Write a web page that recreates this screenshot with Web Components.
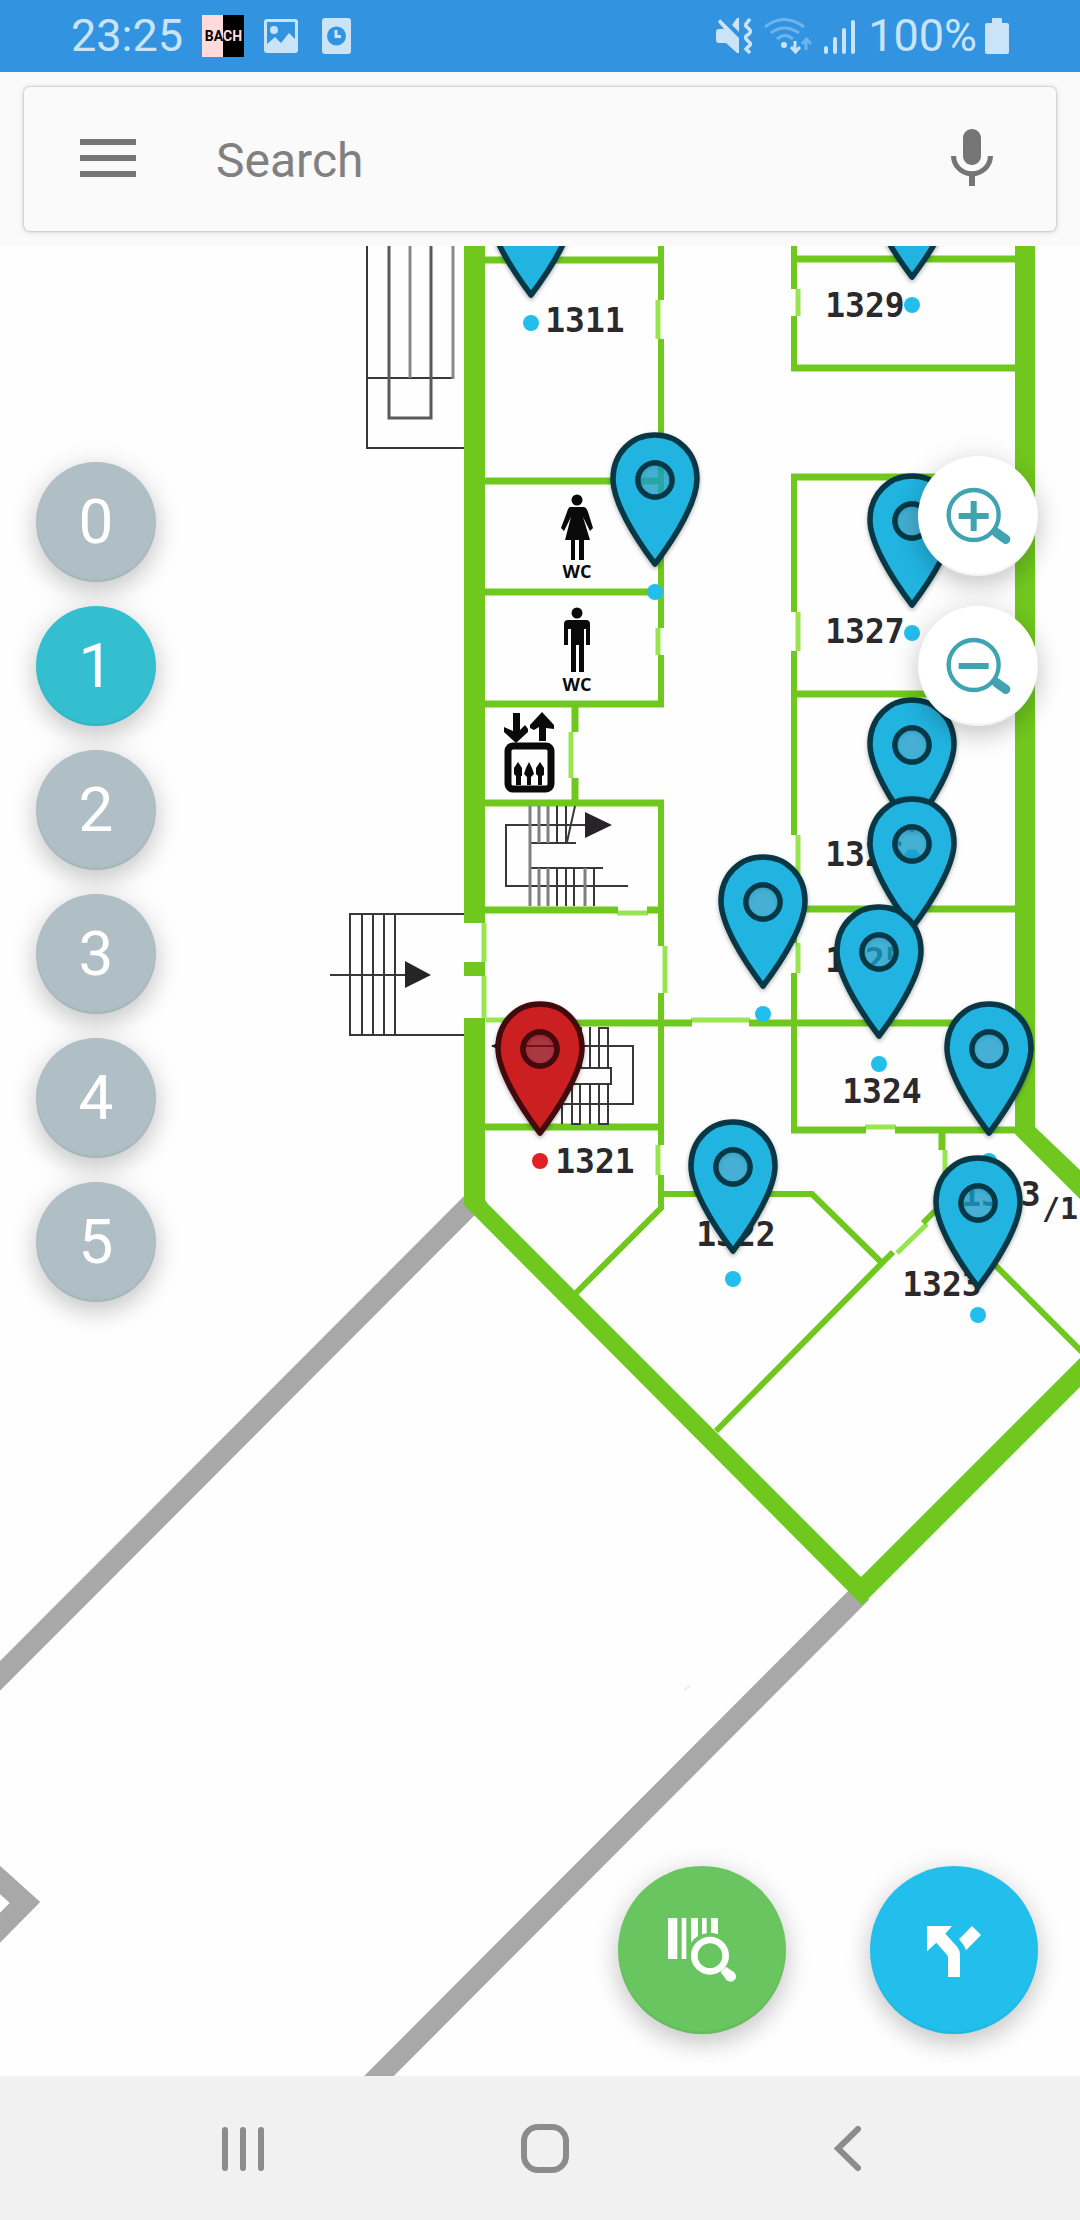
<!DOCTYPE html>
<html lang="en">
<head>
<meta charset="utf-8">
<meta name="viewport" content="width=device-width, initial-scale=1">
<title>Floor map</title>
<style>
  html, body { margin: 0; }
  body { font-family: Roboto, "Noto Sans", sans-serif; background: #fafafa; }
</style>
</head>
<body>
<map-app></map-app>

<template id="tpl-status">
  <style>
    :host { display: flex; height: 72px; padding: 0 71px; box-sizing: border-box; align-items: center; justify-content: space-between; background: #3294e1; color: #cae3f7; font-size: 45px; line-height: 72px; }
    .group { display: flex; align-items: center; }
    .left { gap: 19px; }
    .right { gap: 12px; }
    .power { gap: 8px; }
    svg { display: block; flex: none; }
    .art { display: flex; width: 42px; height: 42px; font: bold 14px/42px Roboto, sans-serif; }
    .art span { flex: 1; background: #ffdada; color: #000; text-align: right; }
    .art span + span { background: #000; color: #ffdada; text-align: left; }
  </style>
  <div class="group left">
    <span>23:25</span>
    <div class="art"><span>BA</span><span>CH</span></div>
    <svg width="36" height="36" viewBox="0 0 36 36"><path fill="#cae3f7" fill-rule="evenodd" d="M4 1H32Q35 1 35 4V32Q35 35 32 35H4Q1 35 1 32V4Q1 1 4 1ZM4 4V26L12 19L18 25L26 15L32 21V4ZM11 8a4 4 0 1 1 0 8a4 4 0 1 1 0-8Z"/></svg>
    <svg width="36" height="36" viewBox="0 0 36 36"><rect x="4" width="29" height="36" rx="3" fill="#cae3f7"/><circle cx="18.500" cy="18" r="9.500" fill="#3294e1"/><path d="M18 12V18.500H23" fill="none" stroke="#cae3f7" stroke-width="3"/></svg>
  </div>
  <div class="group right">
    <svg width="36" height="36" viewBox="0 0 36 36" fill="#cae3f7"><path d="M0 14Q0 11 3 11H8L2 4L4 1L23 20V35H21L10 25H3Q0 25 0 22ZM23 0V14L16 7L21 0Z"/><path d="M34 1L30 6Q29 8 31 9L34 12Q35 14 33 16L30 18Q29 20 31 22L34 25Q35 27 33 28L30 31L34 35" fill="none" stroke="#cae3f7" stroke-width="3.500"/></svg>
    <svg width="48" height="36" viewBox="0 0 48 36" fill="none" stroke-width="3"><g stroke="#6fb3ea"><path d="M1 9Q20-6 40 9M7 15Q20 5 35 15M13 21Q21 14 29 21"/><path d="M42 32V22M38 26L42.500 21L47 26"/></g><circle cx="20" cy="27" r="3" fill="#cae3f7"/><path d="M31 23V33M27 29L31.500 34L36 29" stroke="#cae3f7"/></svg>
    <svg width="32" height="36" viewBox="0 0 32 36" fill="#cae3f7"><rect y="28" width="4" height="8" rx="2"/><rect x="9" y="19" width="4" height="17" rx="2"/><rect x="18" y="10" width="4" height="26" rx="2"/><rect x="27" y="2" width="4" height="34" rx="2"/></svg>
    <div class="group power">
      <span>100%</span>
      <svg width="24" height="36" viewBox="0 0 24 36" fill="#cae3f7"><path d="M7 1Q7 0 8 0H16Q17 0 17 1V5H22Q24 5 24 7V34Q24 36 22 36H2Q0 36 0 34V7Q0 5 2 5H7Z"/></svg>
    </div>
  </div>
</template>

<template id="tpl-search">
  <style>
    :host { display: block; padding: 15px 24px; background: #fafafa; }
    form { display: flex; align-items: center; height: 144px; box-sizing: border-box; padding: 0 48px; border-radius: 6px; background: #fafafa; box-shadow: 0 0 2px 1px rgba(0,0,0,.14), 0 1px 7px rgba(0,0,0,.12); }
    button { display: block; width: 72px; height: 72px; padding: 0; border: 0; background: none; flex: none; }
    svg { display: block; fill: #757575; }
    input { flex: 1; min-width: 0; height: 72px; box-sizing: border-box; margin: 0 24px 0 72px; padding: 2px 0 0; border: 0; outline: 0; background: none; font: 48px Roboto, sans-serif; color: #333; }
    input::placeholder { color: #808080; opacity: 1; }
  </style>
  <form role="search">
    <button type="button" aria-label="Menu"><svg width="72" height="72" viewBox="0 0 72 72"><path d="M8 54h56v-6H8zM8 38h56v-6H8zM8 22h56v-6H8z"/></svg></button>
    <input type="search" aria-label="Search" placeholder="Search">
    <button type="button" aria-label="Voice search"><svg width="72" height="72" viewBox="0 0 24 24"><path d="M12 14c1.660 0 3-1.340 3-3V5c0-1.660-1.340-3-3-3S9 3.340 9 5v6c0 1.660 1.340 3 3 3zm5.300-3c0 3-2.540 5.100-5.300 5.100S6.700 14 6.700 11H5c0 3.410 2.720 6.230 6 6.720V21h2v-3.280c3.280-.48 6-3.300 6-6.720h-1.700z"/></svg></button>
  </form>
</template>

<template id="tpl-pin">
  <style>
    :host { position: absolute; width: 0; height: 0; }
    svg { position: absolute; left: -50px; top: -52px; width: 100px; height: 180px; overflow: visible; }
    .shape { fill: var(--pin-fill, #22b4e1); stroke: var(--pin-line, #083845); stroke-width: 5.500; stroke-linejoin: round; filter: drop-shadow(0 2px 2px rgba(0,0,0,.3)); }
    .ring { fill: none; stroke: var(--pin-line, #083845); stroke-width: 5; }
    .hole { fill: var(--pin-hole, rgba(22,156,200,.8)); }
    .dot { fill: var(--pin-dot, #23bfec); }
    :host([selected]) { --pin-fill: #cc1f21; --pin-line: #420a0c; --pin-hole: rgba(145,0,13,.78); --pin-dot: #e02024; }
  </style>
  <svg viewBox="-50 -52 100 180">
    <circle class="dot" cx="0" cy="112" r="8"/>
    <path class="shape" fill-rule="evenodd" d="M0 84C-22 55-42 21-42-1C-42-27-23-45 0-45C23-45 42-27 42-1C42 21 22 55 0 84ZM0-17A17 17 0 1 0 0 17A17 17 0 1 0 0-17Z"/>
    <circle class="hole" r="17"/><circle class="ring" r="17"/>
  </svg>
</template>

<template id="tpl-round">
  <style>
    :host { display: block; }
    button { display: flex; align-items: center; justify-content: center; width: var(--size, 120px); height: var(--size, 120px); padding: 0; border: 0; border-radius: 50%; background: var(--fill, #b0bec5); color: #fff; font: 62px/120px Roboto, sans-serif; box-shadow: inset 0 -2px 2px rgba(0,0,0,.06), 0 10px 24px rgba(0,0,0,.18), 0 0 32px rgba(0,0,0,.07); }
  </style>
  <button type="button"><slot></slot></button>
</template>

<template id="tpl-plan">
  <style>
    :host { display: block; position: absolute; left: 0; top: 0; }
    svg { display: block; }
    .rooms text { font: bold 33px "DejaVu Sans Mono", monospace; fill: #2c292c; text-anchor: middle; }
    .rooms .suffix { font-size: 30px; }
    .wc { font: bold 18px "Open Sans", sans-serif; text-anchor: middle; }
  </style>
  <svg width="1080" height="1830" viewBox="0 246 1080 1830" fill="none">
    <!-- corridors to neighbouring blocks -->
    <g stroke="#a8a8a8" stroke-width="21">
      <path d="M480 1195L-20 1696M862 1592L370 2085M-20 1862L25 1902.500L-20 1948"/>
    </g>
    <path d="M684 1690L690 1686" stroke="#ececec" stroke-width="2"/>
    <!-- outer walls -->
    <g fill="#70c81e">
      <path d="M464 246H485V923H464ZM464 962H485V976H464ZM464 1018H485V1201L861 1577L1080 1358V1387L862 1605L464 1205Z"/>
      <path d="M1015 246H1035V1127L1080 1170V1199L1015 1134Z"/>
    </g>
    <!-- doors -->
    <g stroke="#97e650" stroke-width="5">
      <path d="M658 300V339M658 628V655M571 732V778M665 946V993M658 1145V1175M484 923V962M484 976V1018M617 913H648M486 1020H545M691 1020H750M798 289V316M798 612V651M798 835V875M798 943V973M865 1127H896M945 1150V1180M897 1253L927 1224"/>
    </g>
    <!-- inner walls -->
    <g stroke="#70c81e" stroke-width="6">
      <path d="M661 246V300M661 339V628M661 655V707M661 800V946M661 993V1145M661 1175V1208L576 1293"/>
      <path d="M661 1194H812L882 1263M716 1431L893 1252M923 1223L946 1200M970 1240L1082 1352"/>
      <path d="M794 246V289M794 316V368M794 612V477M794 651V835M794 875V943M794 973V1130"/>
    </g>
    <g stroke="#70c81e" stroke-width="7">
      <path d="M575 704V732M575 778V803M942 1131V1150"/>
      <path d="M484 260H664M484 481H664M484 592H664M484 704H664M484 803H664M484 910H618M647 910H664M540 1023H692M749 1023H1016M484 1127H664"/>
      <path d="M791 259H1016M791 368H1016M791 477H1016M791 694H1016M791 909H1016M791 1130H866M895 1130H1016"/>
    </g>
    <!-- staircases -->
    <g stroke="#39373a" stroke-width="2">
      <path d="M367 246V448H464M367 378H453"/>
      <path d="M389 246V418H431V246" stroke="#5b595b" stroke-width="3"/>
      <path d="M410 246V378M453 246V379" stroke="#888" stroke-width="3"/>
      <path d="M464 914H350V1035H464M362 914V1035M373 914V1035M384 914V1035M395 914V1035M330 975H410"/>
      <path d="M590 825H506V886H628M557 806V842M566 806V842M575 806L567 842M530 843H576M530 868H603M557 868V906M566 868V906M574 868V906M594 868V906"/>
      <path d="M530 806V906M539 806V843M548 806V843M539 868V906M548 868V906M585 868V906" stroke="#807e80" stroke-width="3"/>
      <path d="M492 1046H633V1104H520M540 1068H611V1084H540M572 1027V1068M581 1027V1068M590 1027V1068M599 1068V1028H608V1068M562 1084V1124M572 1084V1124H580V1084M590 1084V1124M599 1084V1124H608V1084"/>
    </g>
    <path fill="#272427" d="M405 961L431 975L405 988ZM585 812L612 825L585 838ZM491 1046L512 1036V1056Z"/>
    <!-- facilities -->
    <g fill="#0a0a0a">
      <circle cx="577" cy="500" r="5.500"/>
      <path d="M570 507H584Q587 508 588 512L593 528L590 531L583 517L590 540H584V560H579V540H575V560H571V540H565L571 517L564 531L561 528L567 512Q568 508 570 507Z"/>
      <circle cx="577" cy="613" r="5.500"/>
      <path d="M568 620H586Q590 620 590 624V645H586V629H584V672H579V645H576V672H571V629H568V645H564V624Q564 620 568 620Z"/>
      <path d="M513 713H520V730L525 725L528 729V732L516 743L504 732V727L513 731ZM539 741V727L534 730L530 728V725L542 712L554 725V729L546 728V741Z"/>
      <rect x="508" y="746" width="43" height="43" rx="5" fill="none" stroke="#0a0a0a" stroke-width="7"/>
      <path d="M518 762L522 768V776H521V785H516V776L514 774V768ZM529 762L532 768L534 774L531 777V785H527V777L524 774L526 768ZM540 762L544 768V775L542 776V785H538V776L536 774V768Z"/>
      <text class="wc" x="577" y="578">WC</text>
      <text class="wc" x="577" y="691">WC</text>
    </g>
    <g class="rooms">
      <text x="585" y="332">1311</text>
      <text x="865" y="317">1329</text>
      <text x="865" y="643">1327</text>
      <text x="865" y="866">1326</text>
      <text x="865" y="972">1325</text>
      <text x="882" y="1103">1324</text>
      <text x="595" y="1173">1321</text>
      <text x="736" y="1246">1322</text>
      <text x="942" y="1296">1323</text>
      <text x="1001" y="1206">1323</text>
      <text class="suffix" x="1060" y="1219">/1</text>
    </g>
  </svg>
</template>

<template id="tpl-map">
  <style>
    :host { display: block; position: relative; overflow: hidden; background: #fefefe; }
    .floors, .zoom, .actions { position: absolute; display: flex; }
    .floors { left: 36px; top: 216px; flex-direction: column; gap: 24px; }
    .floors [active] { --fill: #34bfd1; }
    .zoom { right: 42px; top: 210px; flex-direction: column; gap: 30px; --fill: #fff; }
    .actions { right: 42px; bottom: 42px; gap: 84px; --size: 168px; }
    .scan { --fill: #69c55f; }
    .route { --fill: #23bfec; }
    svg { display: block; }
  </style>
  <floor-plan></floor-plan>
  <div class="pins"></div>
  <div class="floors"></div>
  <div class="zoom">
    <round-button label="Zoom in"><svg width="120" height="120" viewBox="0 0 360 360" fill="none" stroke="#3fa3b0"><circle cx="167" cy="177" r="75" stroke-width="13"/><path d="M122 180H212M167 135V225" stroke-width="18"/><path d="M222 220L240 232" stroke-width="26"/><path d="M238 232L263 250" stroke-width="28" stroke-linecap="round"/></svg></round-button>
    <round-button label="Zoom out"><svg width="120" height="120" viewBox="0 0 360 360" fill="none" stroke="#3fa3b0"><circle cx="167" cy="177" r="75" stroke-width="13"/><path d="M122 180H212" stroke-width="18"/><path d="M222 220L240 232" stroke-width="26"/><path d="M238 232L263 250" stroke-width="28" stroke-linecap="round"/></svg></round-button>
  </div>
  <div class="actions">
    <round-button class="scan" label="Find by barcode"><svg width="168" height="168" viewBox="114 138 504 504" fill="#fff"><path d="M264 294H292V417H264ZM305 294H319V417H305ZM333 294H354V348Q341 356 333 368ZM366 294H380V340L366 343ZM393 294H414V343Q404 339 393 338Z"/><circle cx="390" cy="407" r="47" fill="none" stroke="#fff" stroke-width="20"/><path d="M438 440L462 457Q472 467 466 478Q455 491 440 481L422 456Z"/></svg></round-button>
    <round-button class="route" label="Directions"><svg width="168" height="168" viewBox="870 138 504 504" fill="#fff"><path d="M1041 318H1116L1096 341L1132 381Q1140 391 1140 405V471H1104V412Q1104 407 1099 402L1069 368L1041 394ZM1176 318L1203 345L1158 391Q1155 378 1137 358Z"/></svg></round-button>
  </div>
</template>

<template id="tpl-nav">
  <style>
    :host { display: flex; height: 144px; padding: 0 82px 0 92px; box-sizing: border-box; background: #f1f1f1; }
    button { flex: 1; display: flex; align-items: center; justify-content: center; padding: 0; border: 0; background: none; }
    svg { display: block; fill: none; stroke: #8c8c8c; stroke-width: 6; stroke-linecap: round; }
  </style>
  <button type="button" aria-label="Recent apps"><svg width="48" height="50" viewBox="0 0 48 50"><path d="M6 7V45M24 7V45M42 7V45"/></svg></button>
  <button type="button" aria-label="Home"><svg width="48" height="50" viewBox="0 0 48 50"><rect x="3" y="4" width="42" height="43" rx="14"/></svg></button>
  <button type="button" aria-label="Back"><svg width="48" height="50" viewBox="0 0 48 50"><path d="M35 6L15 25.500L35 45"/></svg></button>
</template>

<script>
  function stamp(host, id) {
    const root = host.attachShadow({ mode: "open" });
    root.append(document.getElementById(id).content.cloneNode(true));
    return root;
  }

  class StatusBar extends HTMLElement {
    constructor() { super(); stamp(this, "tpl-status"); }
  }
  class SearchBar extends HTMLElement {
    constructor() { super(); stamp(this, "tpl-search"); }
  }
  class FloorPlan extends HTMLElement {
    constructor() { super(); stamp(this, "tpl-plan"); }
  }
  class NavBar extends HTMLElement {
    constructor() { super(); stamp(this, "tpl-nav"); }
  }
  class RoundButton extends HTMLElement {
    constructor() { super(); stamp(this, "tpl-round"); }
    connectedCallback() {
      const label = this.getAttribute("label");
      if (label) this.shadowRoot.querySelector("button").setAttribute("aria-label", label);
    }
  }
  class MapPin extends HTMLElement {
    constructor() { super(); stamp(this, "tpl-pin"); }
    connectedCallback() {
      this.style.left = this.getAttribute("x") + "px";
      this.style.top = this.getAttribute("y") + "px";
    }
  }

  // Pin heads in canvas coordinates, drawn from north to south.
  const PINS = [
    [912, -53], [531, -35], [655, 234], [912, 275], [912, 499], [912, 598],
    [763, 656], [879, 706], [989, 803], [540, 803, true], [733, 921], [978, 957]
  ];
  const FLOORS = [0, 1, 2, 3, 4, 5];
  const CURRENT_FLOOR = 1;

  class MapView extends HTMLElement {
    constructor() {
      super();
      const root = stamp(this, "tpl-map");
      root.querySelector(".pins").innerHTML = PINS.map(([x, y, selected]) =>
        `<map-pin x="${x}" y="${y}"${selected ? " selected" : ""}></map-pin>`).join("");
      root.querySelector(".floors").innerHTML = FLOORS.map(n =>
        `<round-button${n === CURRENT_FLOOR ? " active" : ""}>${n}</round-button>`).join("");
    }
  }
  class MapApp extends HTMLElement {
    constructor() {
      super();
      this.attachShadow({ mode: "open" }).innerHTML = `
        <style>
          :host { display: flex; flex-direction: column; min-height: 100vh; }
          map-view { flex: 1; }
        </style>
        <status-bar></status-bar>
        <search-bar></search-bar>
        <map-view></map-view>
        <nav-bar></nav-bar>`;
    }
  }

  customElements.define("status-bar", StatusBar);
  customElements.define("search-bar", SearchBar);
  customElements.define("floor-plan", FloorPlan);
  customElements.define("nav-bar", NavBar);
  customElements.define("round-button", RoundButton);
  customElements.define("map-pin", MapPin);
  customElements.define("map-view", MapView);
  customElements.define("map-app", MapApp);
</script>
</body>
</html>
